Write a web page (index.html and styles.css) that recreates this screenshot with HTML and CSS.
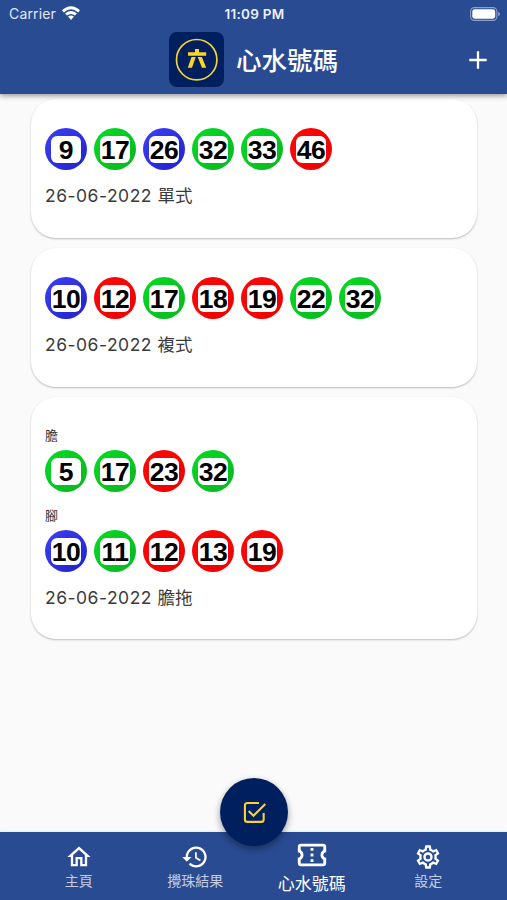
FILE: index.html
```html
<!DOCTYPE html>
<html lang="zh-Hant">
<head>
<meta charset="utf-8">
<meta name="viewport" content="width=device-width, initial-scale=1">
<title>心水號碼</title>
<link rel="stylesheet" href="styles.css">
</head>
<body>
<div class="app">
  <header class="header">
    <div class="status">
      <div class="carrier"><span>Carrier</span>
        <svg class="wifi" viewBox="0 0 18 14"><path d="M0 4.3Q9-3.7 18 4.3L16.1 6.4Q9 .2 1.9 6.4ZM3.1 7.5Q9 2.6 14.9 7.5L13 9.6Q9 6.3 5 9.6ZM6 10.6Q9 8.4 12 10.6L9 14Z" fill="#fff"/></svg>
      </div>
      <span class="time">11:09 PM</span>
      <svg class="battery" viewBox="0 0 30 14"><rect x=".6" y=".6" width="26.3" height="12.8" rx="3.8" fill="none" stroke="#8d9fca" stroke-width="1.1"/><rect x="2.3" y="2.3" width="22.9" height="9.4" rx="2.4" fill="#fff"/><path d="M28.1 4.8Q30 5.6 30 7T28.1 9.2Z" fill="#8d9fca"/></svg>
    </div>
    <div class="titlebar">
      <svg class="logo" viewBox="0 0 55 55"><rect width="55" height="55" rx="8" fill="#001f5e"/><circle cx="27.7" cy="27.7" r="20.2" fill="none" stroke="#f2d33c" stroke-width="1.7"/><path d="M26 17h4v3.2h7.2v3.5H19v-3.5h7zM22.5 25h4.2L23 35.8h-4.2zM28.7 25h4.2l4.3 10.8H33z" fill="#ffd61f"/></svg>
      <h1>心水號碼</h1>
      <svg class="plus" viewBox="0 0 18 18"><path d="M9 .3v17.4M.3 9h17.4" stroke="#fff" stroke-width="2.3"/></svg>
    </div>
  </header>

  <main class="list">
    <section class="card">
      <div class="balls">
        <span class="ball blue"><b>9</b></span><span class="ball green"><b>17</b></span><span class="ball blue"><b>26</b></span><span class="ball green"><b>32</b></span><span class="ball green"><b>33</b></span><span class="ball red"><b>46</b></span>
      </div>
      <p class="date">26-06-2022 <span>單式</span></p>
    </section>
    <section class="card">
      <div class="balls">
        <span class="ball blue"><b>10</b></span><span class="ball red"><b>12</b></span><span class="ball green"><b>17</b></span><span class="ball red"><b>18</b></span><span class="ball red"><b>19</b></span><span class="ball green"><b>22</b></span><span class="ball green"><b>32</b></span>
      </div>
      <p class="date">26-06-2022 <span>複式</span></p>
    </section>
    <section class="card grouped">
      <p class="label">膽</p>
      <div class="balls">
        <span class="ball green"><b>5</b></span><span class="ball green"><b>17</b></span><span class="ball red"><b>23</b></span><span class="ball green"><b>32</b></span>
      </div>
      <p class="label second">腳</p>
      <div class="balls">
        <span class="ball blue"><b>10</b></span><span class="ball green"><b>11</b></span><span class="ball red"><b>12</b></span><span class="ball red"><b>13</b></span><span class="ball red"><b>19</b></span>
      </div>
      <p class="date">26-06-2022 <span>膽拖</span></p>
    </section>
  </main>

  <nav class="tabs">
    <a class="tab"><svg viewBox="0 0 24 24"><path d="M12 5.69l5 4.5V18h-2v-6H9v6H7v-7.81l5-4.5M12 3L2 12h3v8h6v-6h2v6h6v-8h3L12 3z"/></svg><span>主頁</span></a>
    <a class="tab"><svg viewBox="0 0 24 24"><path d="M13 3c-4.97 0-9 4.03-9 9H1l3.89 3.89.07.14L9 12H6c0-3.87 3.13-7 7-7s7 3.13 7 7-3.13 7-7 7c-1.93 0-3.68-.79-4.94-2.06l-1.42 1.42C8.27 19.99 10.51 21 13 21c4.97 0 9-4.03 9-9s-4.03-9-9-9zm-1 5v5l4.28 2.54.72-1.21-3.5-2.08V8H12z"/></svg><span>攪珠結果</span></a>
    <a class="tab active"><svg viewBox="0 0 24 24"><path d="M22 10V6c0-1.11-.9-2-2-2H4c-1.1 0-1.99.89-1.99 2v4c1.1 0 1.99.9 1.99 2s-.89 2-2 2v4c0 1.1.9 2 2 2h16c1.1 0 2-.9 2-2v-4c-1.1 0-2-.9-2-2s.9-2 2-2zm-2-1.46c-1.19.69-2 1.99-2 3.46s.81 2.77 2 3.46V18H4v-2.54c1.19-.69 2-1.99 2-3.46 0-1.48-.8-2.77-1.99-3.46L4 6h16v2.54zM11 15h2v2h-2zm0-4h2v2h-2zm0-4h2v2h-2z"/></svg><span>心水號碼</span></a>
    <a class="tab"><svg viewBox="0 0 24 24"><path d="M19.43 12.98c.04-.32.07-.64.07-.98 0-.34-.03-.66-.07-.98l2.11-1.65c.19-.15.24-.42.12-.64l-2-3.46c-.09-.16-.26-.25-.44-.25-.06 0-.12.01-.17.03l-2.49 1c-.52-.4-1.08-.73-1.69-.98l-.38-2.65C14.46 2.18 14.25 2 14 2h-4c-.25 0-.46.18-.49.42l-.38 2.65c-.61.25-1.17.59-1.69.98l-2.49-1c-.06-.02-.12-.03-.18-.03-.17 0-.34.09-.43.25l-2 3.46c-.13.22-.07.49.12.64l2.11 1.65c-.04.32-.07.65-.07.98 0 .33.03.66.07.98l-2.11 1.65c-.19.15-.24.42-.12.64l2 3.46c.09.16.26.25.44.25.06 0 .12-.01.17-.03l2.49-1c.52.4 1.08.73 1.69.98l.38 2.65c.03.24.24.42.49.42h4c.25 0 .46-.18.49-.42l.38-2.65c.61-.25 1.17-.59 1.69-.98l2.49 1c.06.02.12.03.18.03.17 0 .34-.09.43-.25l2-3.46c.12-.22.07-.49-.12-.64l-2.11-1.65zm-1.98-1.71c.04.31.05.52.05.73 0 .21-.02.43-.05.73l-.14 1.13.89.7 1.08.84-.7 1.21-1.27-.51-1.04-.42-.9.68c-.43.32-.84.56-1.25.73l-1.06.43-.16 1.13-.2 1.35h-1.4l-.19-1.35-.16-1.13-1.06-.43c-.43-.18-.83-.41-1.23-.71l-.91-.7-1.06.43-1.27.51-.7-1.21 1.08-.84.89-.7-.14-1.13c-.03-.31-.05-.54-.05-.74s.02-.43.05-.73l.14-1.13-.89-.7-1.08-.84.7-1.21 1.27.51 1.04.42.9-.68c.43-.32.84-.56 1.25-.73l1.06-.43.16-1.13.2-1.35h1.39l.19 1.35.16 1.13 1.06.43c.43.18.83.41 1.23.71l.91.7 1.06-.43 1.27-.51.7 1.21-1.07.85-.89.7.14 1.13zM12 8c-2.21 0-4 1.79-4 4s1.79 4 4 4 4-1.79 4-4-1.79-4-4-4zm0 6c-1.1 0-2-.9-2-2s.9-2 2-2 2 .9 2 2-.9 2-2 2z"/></svg><span>設定</span></a>
    <div class="fab"><svg viewBox="0 0 24 24"><path d="M16.3 2.8H5.2Q2.8 2.8 2.8 5.2V18.6Q2.8 21 5.2 21H18.4Q20.8 21 20.8 18.6V12.4M6.4 10.6L11 15.2L22.4 3.8" fill="none" stroke="#f5d433" stroke-width="2"/></svg></div>
  </nav>
</div>
</body>
</html>
```

FILE: styles.css
```css
* { box-sizing: border-box; }
body { margin: 0; background: #fafafa; font-family: Inter, "Noto Sans CJK TC", sans-serif; }
h1, p { margin: 0; }
svg { display: block; flex: none; }
.app { height: 900px; display: flex; flex-direction: column; overflow: hidden; }

.header { height: 94px; flex: none; background: #294b92; color: #fff; box-shadow: 0 2px 5px rgba(0,0,0,.38); z-index: 1; }
.status { height: 28px; padding: 0 7px 0 9px; display: grid; grid-template-columns: 1fr auto 1fr; align-items: center; line-height: 28px; font-size: 14px; }
.carrier { display: flex; align-items: center; gap: 6px; letter-spacing: .15px; color: #e3e8f3; }
.wifi { width: 18px; height: 14px; margin-top: -2px; }
.time { font-size: 13.5px; font-weight: 600; letter-spacing: .25px; color: #eef1f8; }
.battery { width: 30px; height: 14px; justify-self: end; margin-top: -1px; }
.titlebar { height: 64px; padding: 0 20px 0 169px; display: flex; align-items: center; margin-top: -1px; }
.logo { width: 55px; height: 55px; margin-top: 1px; }
h1 { margin-left: 12px; font: 500 25.5px/36px "Noto Sans CJK TC", sans-serif; }
.plus { width: 18px; height: 18px; margin-left: auto; margin-top: 1px; }

.list { flex: 1; padding: 5px 30px 0 31px; display: flex; flex-direction: column; gap: 10px; }
.card { height: 139px; padding: 29px 14px 0; border-radius: 25px; background: #fff; box-shadow: 0 1px 2px rgba(0,0,0,.26); }
.grouped { height: 242px; padding-top: 29px; }
.balls { display: flex; gap: 7px; }
.ball { width: 42px; height: 42px; border-radius: 50%; display: grid; place-items: center; }
.ball b { width: 30px; height: 27px; border-radius: 6px; background: #fff; color: #000; display: flex; justify-content: center; font: bold 26.5px/29px "Liberation Sans", sans-serif; letter-spacing: -.4px; }
.blue { background: linear-gradient(135deg, #3d40f4, #2021cd); }
.green { background: linear-gradient(135deg, #05dc25, #09b51f); }
.red { background: linear-gradient(135deg, #ff0808, #ed0000); }
.date { margin-top: 14px; font-size: 17.5px; line-height: 24px; letter-spacing: .5px; color: #3b3b3b; white-space: nowrap; }
.date span { letter-spacing: 0; }
.label { font-size: 13px; line-height: 18px; height: 24px; color: #333; }
.second { margin-top: 14px; }

.tabs { position: relative; flex: none; height: 68px; padding: 0 20.5px; display: flex; background: #294b92; box-shadow: 0 -1px 2px rgba(0,0,0,.06); }
.tab { flex: 1; display: flex; flex-direction: column; align-items: center; padding-top: 11px; font-size: 14px; line-height: 20px; color: #c3cce2; white-space: nowrap; }
.tab svg { width: 28px; height: 28px; fill: #fff; }
.tab.active { padding-top: 6px; font-size: 17px; line-height: 24px; color: #fff; }
.active svg { width: 34px; height: 34px; }
.fab { position: absolute; left: 220px; top: -54px; width: 68px; height: 68px; border-radius: 50%; background: #001f5e; display: grid; place-items: center; box-shadow: 0 3px 7px rgba(0,0,0,.38); }
.fab svg { width: 25px; height: 25px; }
```
